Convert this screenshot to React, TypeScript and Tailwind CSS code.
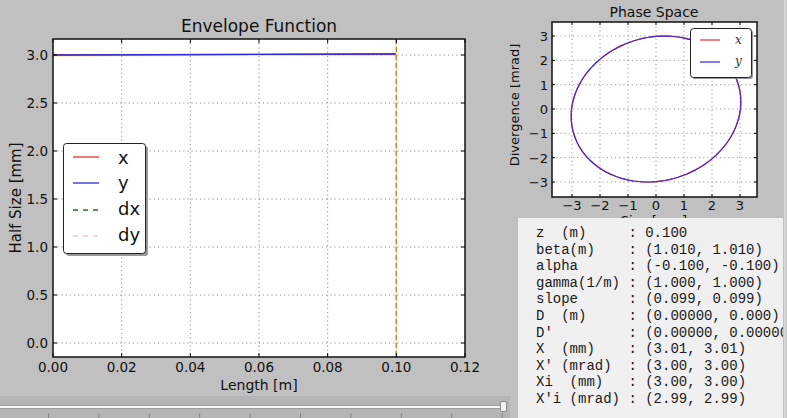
import React from 'react';

const xTicks = [0, 0.02, 0.04, 0.06, 0.08, 0.1, 0.12];
const yTicks = [0, 0.5, 1, 1.5, 2, 2.5, 3];

function EnvelopePlot() {
  const x0 = 53, x1 = 465, y0 = 39, y1 = 357;
  const lx = (v: number) => x0 + (v / 0.12) * (x1 - x0);
  const ly = (v: number) => 343 - v * 96;

  return (
    <svg width={510} height={396} className="block font-['DejaVu_Sans',sans-serif]">
      <text x={259} y={32} fontSize={17} textAnchor="middle" fill="#111">Envelope Function</text>
      <rect x={x0} y={y0} width={x1 - x0} height={y1 - y0} fill="#fff" />

      {/* grid */}
      {xTicks.slice(1, -1).map((v) => (
        <line key={'gx' + v} x1={lx(v)} x2={lx(v)} y1={y0} y2={y1} stroke="#8c8c8c" strokeDasharray="1.2 3" />
      ))}
      {yTicks.map((v) => (
        <line key={'gy' + v} x1={x0} x2={x1} y1={ly(v)} y2={ly(v)} stroke="#8c8c8c" strokeDasharray="1.2 3" />
      ))}

      {/* data */}
      <line x1={x0} x2={lx(0.1)} y1={56} y2={55} stroke="#f0e090" strokeWidth={1} />
      <line x1={x0} x2={lx(0.1)} y1={55} y2={54} stroke="#e03030" strokeWidth={1.3} />
      <line x1={x0} x2={lx(0.1)} y1={55} y2={54} stroke="#2b2bd8" strokeWidth={1.3} />
      <line x1={lx(0.1)} x2={lx(0.1)} y1={y0} y2={y1} stroke="#f2dc90" strokeWidth={1.2} />
      <line x1={lx(0.1)} x2={lx(0.1)} y1={y0} y2={y1} stroke="#b8843a" strokeWidth={1.4} strokeDasharray="5 3" />

      {/* ticks */}
      {xTicks.map((v) => (
        <g key={'tx' + v}>
          <line x1={lx(v)} x2={lx(v)} y1={y0} y2={y0 + 4} stroke="#000" />
          <line x1={lx(v)} x2={lx(v)} y1={y1} y2={y1 - 4} stroke="#000" />
          <text x={lx(v)} y={372} fontSize={13.5} textAnchor="middle" fill="#111">{v.toFixed(2)}</text>
        </g>
      ))}
      {yTicks.map((v) => (
        <g key={'ty' + v}>
          <line x1={x0} x2={x0 + 4} y1={ly(v)} y2={ly(v)} stroke="#000" />
          <line x1={x1} x2={x1 - 4} y1={ly(v)} y2={ly(v)} stroke="#000" />
          <text x={48} y={ly(v) + 5} fontSize={13.5} textAnchor="end" fill="#111">{v.toFixed(1)}</text>
        </g>
      ))}

      <rect x={x0} y={y0} width={x1 - x0} height={y1 - y0} fill="none" stroke="#111" strokeWidth={1.5} />

      <text x={259} y={390} fontSize={14} textAnchor="middle" fill="#111">Length [m]</text>
      <text x={0} y={0} fontSize={15} textAnchor="middle" fill="#111" transform="translate(21 198) rotate(-90)">Half Size [mm]</text>

      {/* legend */}
      <rect x={66} y={146} width={82} height={110} rx={3} fill="#808080" opacity={0.8} />
      <rect x={63.5} y={143.5} width={82} height={110} rx={3} fill="#fff" stroke="#222" strokeWidth={1} />
      <line x1={73} x2={99} y1={157} y2={157} stroke="#e03030" strokeWidth={1.3} />
      <line x1={73} x2={99} y1={183} y2={183} stroke="#2b2bd8" strokeWidth={1.3} />
      <line x1={73} x2={99} y1={210} y2={210} stroke="#1f7a1f" strokeWidth={1.3} strokeDasharray="5 5" />
      <line x1={73} x2={99} y1={236} y2={236} stroke="#f6c4cc" strokeWidth={1.3} strokeDasharray="5 5" />
      <text x={118} y={164} fontSize={18} fill="#111">x</text>
      <text x={118} y={189} fontSize={18} fill="#111">y</text>
      <text x={118} y={215} fontSize={18} fill="#111">dx</text>
      <text x={118} y={241} fontSize={18} fill="#111">dy</text>
    </svg>
  );
}

const pTicks = [-3, -2, -1, 0, 1, 2, 3];

function PhasePlot() {
  const x0 = 552, x1 = 757, y0 = 22, y1 = 197;
  const px = (v: number) => 656 + v * 28;
  const py = (v: number) => 109 - v * 24.33;
  const label = (v: number) => (v < 0 ? '\u2212' + Math.abs(v) : String(v));
  const pts = Array.from({ length: 121 }, (_, i) => {
    const t = (i / 120) * 2 * Math.PI;
    const x = 3.03 * Math.cos(t);
    const xp = -2.985 * (-0.1 * Math.cos(t) + Math.sin(t));
    return `${px(x).toFixed(1)},${py(xp).toFixed(1)}`;
  }).join(' ');

  return (
    <svg width={274} height={218} viewBox="510 0 274 218" className="block font-['DejaVu_Sans',sans-serif]">
      <text x={654} y={17} fontSize={14} textAnchor="middle" fill="#111">Phase Space</text>
      <rect x={x0} y={y0} width={x1 - x0} height={y1 - y0} fill="#fff" />
      {pTicks.map((v) => (
        <g key={'g' + v}>
          <line x1={px(v)} x2={px(v)} y1={y0} y2={y1} stroke="#9a9a9a" strokeDasharray="1.2 3" />
          <line x1={x0} x2={x1} y1={py(v)} y2={py(v)} stroke="#9a9a9a" strokeDasharray="1.2 3" />
        </g>
      ))}
      <polyline points={pts} fill="none" stroke="#e03030" strokeWidth={1.2} />
      <polyline points={pts} fill="none" stroke="#4a2ad0" strokeWidth={1.2} />
      {pTicks.map((v) => (
        <g key={'t' + v}>
          <line x1={px(v)} x2={px(v)} y1={y0} y2={y0 + 3} stroke="#000" />
          <line x1={px(v)} x2={px(v)} y1={y1} y2={y1 - 3} stroke="#000" />
          <line x1={x0} x2={x0 + 3} y1={py(v)} y2={py(v)} stroke="#000" />
          <line x1={x1} x2={x1 - 3} y1={py(v)} y2={py(v)} stroke="#000" />
          <text x={px(v)} y={210} fontSize={13} textAnchor="middle" fill="#111">{label(v)}</text>
          <text x={548} y={py(v) + 5} fontSize={13} textAnchor="end" fill="#111">{label(v)}</text>
        </g>
      ))}
      <rect x={x0} y={y0} width={x1 - x0} height={y1 - y0} fill="none" stroke="#111" strokeWidth={1.5} />
      <text x={654} y={225} fontSize={13} textAnchor="middle" fill="#111">Size [mm]</text>
      <text x={0} y={0} fontSize={13} textAnchor="middle" fill="#111" transform="translate(519 105) rotate(-90)">Divergence [mrad]</text>

      <rect x={692} y={30} width={61} height={49} rx={3} fill="#808080" opacity={0.8} />
      <rect x={690.5} y={28.5} width={61} height={49} rx={3} fill="#fff" stroke="#222" strokeWidth={1} />
      <line x1={700} x2={720} y1={40} y2={40} stroke="#e03030" strokeWidth={1.2} />
      <line x1={700} x2={720} y1={62} y2={62} stroke="#2b2bd8" strokeWidth={1.2} />
      <text x={735} y={44} fontSize={12} fill="#333" fontStyle="italic" className="font-['DejaVu_Serif',serif]">x</text>
      <text x={735} y={65} fontSize={12} fill="#333" fontStyle="italic" className="font-['DejaVu_Serif',serif]">y</text>
    </svg>
  );
}

function Slider() {
  return (
    <div className="flex h-[22px] flex-col bg-[#b5b5b5]">
      <div className="mt-[5px] flex h-[11px] items-center pr-[3px]">
        <div className="h-[4px] flex-1 border-y border-[#9c9c9c] bg-[#f7f7f7]" />
        <div className="h-[11px] w-[7px] rounded-[2px] border border-[#8a8a8a] bg-[#f2f2f2]" />
      </div>
      <svg width={510} height={6} className="block">
        {Array.from({ length: 10 }, (_, i) => (
          <line key={i} x1={48.5 + i * 50.4} x2={48.5 + i * 50.4} y1={1} y2={6} stroke="#888" />
        ))}
      </svg>
    </div>
  );
}

const rows: [string, string][] = [
  ['z  (m)', '0.100'],
  ['beta(m)', '(1.010, 1.010)'],
  ['alpha', '(-0.100, -0.100)'],
  ['gamma(1/m)', '(1.000, 1.000)'],
  ['slope', '(0.099, 0.099)'],
  ['D  (m)', '(0.00000, 0.000)'],
  ["D'", '(0.00000, 0.00000)'],
  ['X  (mm)', '(3.01, 3.01)'],
  ["X' (mrad)", '(3.00, 3.00)'],
  ['Xi  (mm)', '(3.00, 3.00)'],
  ["X'i (mrad)", '(2.99, 2.99)'],
];

export default function App() {
  return (
    <div className="flex h-[418px] w-[787px] overflow-hidden bg-[#c0c0c0]">
      <div className="flex w-[510px] flex-col">
        <EnvelopePlot />
        <Slider />
      </div>
      <div className="flex w-[274px] flex-col">
        <PhasePlot />
        <div className="ml-2 w-[265px] flex-1 overflow-hidden bg-[#f0f0f0] pl-[18px] pt-[7px]">
          <div className="whitespace-pre font-['Liberation_Mono',monospace] text-[14px] leading-[16.6px] text-[#1a1a1a]">
            {rows.map(([k, v]) => (
              <div key={k}>{k.padEnd(11) + ': ' + v}</div>
            ))}
          </div>
        </div>
      </div>
      <div className="w-[2px] bg-[#d6d6d6]" />
      <div className="w-px" />
    </div>
  );
}
